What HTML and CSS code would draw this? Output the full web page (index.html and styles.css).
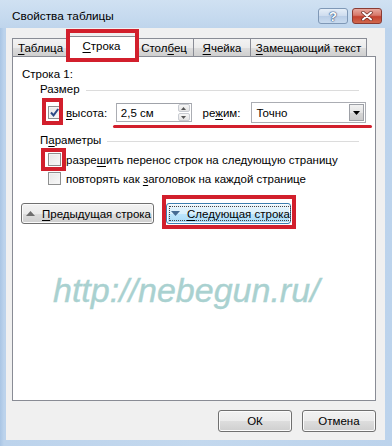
FILE: index.html
```html
<!doctype html>
<html lang="ru">
 <head>
  <meta charset="UTF-8">
  <meta name="viewport" content="width=device-width, initial-scale=1.0">
  <title>Свойства таблицы</title>
  <link rel="stylesheet" href="styles.css">
 </head>
 <body>
  <div class="window">
   <div class="titlebar">
    <span class="title">Свойства таблицы</span>
    <div class="caption-btns">
     <span class="cbtn help">?</span>
     <span class="cbtn close">
      <svg width="14" height="10" viewBox="0 0 14 10">
       <path d="M3 1.5 L11 8.5 M11 1.5 L3 8.5" stroke="#6b2a22" stroke-width="3.4" stroke-linecap="round"/>
       <path d="M3 1.5 L11 8.5 M11 1.5 L3 8.5" stroke="#fff" stroke-width="2" stroke-linecap="round"/>
      </svg>
     </span>
    </div>
   </div>

   <div class="client">
    <!-- вкладки -->
    <div class="tabs">
     <div class="tab tab-table"><span><u>Т</u>аблица</span></div>
     <div class="tab tab-row active"><span><u>С</u>трока</span><span class="mark mark-tab"></span></div>
     <div class="tab tab-col"><span>Стол<u>б</u>ец</span></div>
     <div class="tab tab-cell"><span><u>Я</u>чейка</span></div>
     <div class="tab tab-alt"><span><u>З</u>амещающий текст</span></div>
    </div>

    <div class="panel">
     <div class="row-title">Строка 1:</div>

     <div class="group-head"><span>Размер</span><i class="rule"></i></div>
     <div class="size-row">
      <span class="check">
       <svg width="11" height="11" viewBox="0 0 11 11"><path d="M2 5.5 L4.5 8.3 L9.2 2" fill="none" stroke="#2d4a86" stroke-width="2"/></svg>
       <span class="mark mark-check"></span>
      </span>
      <span class="lbl lbl-height"><u>в</u>ысота:</span>
      <div class="spin">
       <span class="spin-val">2,5 см</span>
       <span class="spin-btns">
        <span class="sbtn"><svg width="5" height="3" viewBox="0 0 5 3"><path d="M0 3 L2.5 0 L5 3Z" fill="#555"/></svg></span>
        <span class="sbtn"><svg width="5" height="3" viewBox="0 0 5 3"><path d="M0 0 L2.5 3 L5 0Z" fill="#555"/></svg></span>
       </span>
      </div>
      <span class="lbl lbl-mode">ре<u>ж</u>им:</span>
      <div class="select">
       <span class="select-val">Точно</span>
       <span class="drop"><svg width="7" height="4" viewBox="0 0 7 4"><path d="M0 0 L7 0 L3.5 4Z" fill="#000"/></svg></span>
      </div>
      <span class="mark mark-line"></span>
     </div>

     <div class="group-head group-params"><span>П<u>а</u>раметры</span><i class="rule"></i></div>
     <div class="check-row">
      <span class="check"><span class="mark mark-check2"></span></span>
      <span class="lbl">разре<u>ш</u>ить перенос строк на следующую страницу</span>
     </div>
     <div class="check-row">
      <span class="check"></span>
      <span class="lbl">повторять как <u>з</u>аголовок на каждой странице</span>
     </div>

     <div class="nav-row">
      <span class="btn btn-prev">
       <svg class="arr" width="9" height="5" viewBox="0 0 9 5"><path d="M0 5 L4.5 0 L9 5Z" fill="#6e6e6e"/></svg>
       <span class="btn-text"><u>П</u>редыдущая строка</span>
      </span>
      <span class="btn btn-next">
       <span class="focus">
        <svg class="arr" width="9" height="5" viewBox="0 0 9 5"><path d="M0 0 L9 0 L4.5 5Z" fill="#456b93"/></svg>
        <span class="btn-text"><u>С</u>ледующая строка</span>
       </span>
       <span class="mark mark-btn"></span>
      </span>
     </div>

     <div class="watermark">http://nebegun.ru/</div>
    </div>

    <div class="footer">
     <span class="btn btn-dlg">ОК</span>
     <span class="btn btn-dlg">Отмена</span>
    </div>
   </div>
  </div>
 </body>
</html>
```

FILE: styles.css
```css
body {
    margin: 0;
    font-family: "Liberation Sans", Arial, sans-serif;
    font-size: 11.5px;
    color: #000;
}
u {
    text-decoration: underline;
    text-underline-offset: 2px;
}
.window {
    width: 392px;
    height: 446px;
    box-sizing: border-box;
    padding: 0 7px 6px 6px;
    background: linear-gradient(90deg, #a9c5e4 0px, #bcd3ec 4px, #c3d8ee 50%, #bcd3ec 100%);
    display: flex;
    flex-direction: column;
}
.titlebar {
    height: 28px;
    display: flex;
    align-items: center;
    margin-left: -6px;
    margin-right: -7px;
    padding: 0 10px 0 12px;
    background: linear-gradient(180deg, #d0e1f2 0%, #c6daef 60%, #bfd5ec 100%);
}
.title {
    flex: 1;
    font-size: 11.8px;
    padding-top: 3px;
}
.caption-btns {
    display: flex;
    gap: 4px;
    align-self: flex-start;
    margin-top: 8px;
}
.cbtn {
    width: 30px;
    height: 16px;
    box-sizing: border-box;
    border-radius: 3px;
    display: flex;
    align-items: center;
    justify-content: center;
}
.help {
    border: 1px solid #7f98b6;
    background: linear-gradient(180deg, #e6eef8 0%, #cddcee 50%, #b9cde6 51%, #c9dbef 100%);
    color: #fff;
    font-weight: bold;
    font-size: 13px;
    text-shadow: 0 0 1px #2c4b79, 0 0 1px #2c4b79, 0 0 2px #4a6a98;
}
.close {
    border: 1px solid #8a3b33;
    background: linear-gradient(180deg, #e8a99f 0%, #d7786a 45%, #c4412f 55%, #d0684d 100%);
}
.client {
    flex: 1;
    background: #f0f0f0;
    padding: 10px 9px 0 6px;
}

/* вкладки */
.tabs {
    display: flex;
    align-items: flex-end;
    height: 19px;
    margin-bottom: -1px;
    position: relative;
    z-index: 1;
}
.tab {
    height: 18px;
    box-sizing: border-box;
    margin-bottom: 1px;
    margin-left: -1px;
    border: 1px solid #898c95;
    border-bottom: none;
    background: linear-gradient(180deg, #f3f3f3 0%, #ebebeb 50%, #dddddd 51%, #cfcfcf 100%);
    display: flex;
    align-items: center;
    justify-content: center;
    position: relative;
    white-space: nowrap;
}
.tab-table { margin-left: 0; width: 57px; }
.tab-row { width: 71px; margin-left: -3px; }
.tab-col { width: 60px; margin-left: -3px; }
.tab-cell { width: 58px; }
.tab-alt { width: 117px; }
.tab.active {
    height: 21px;
    margin-bottom: 0;
    background: #fff;
    z-index: 2;
    padding-bottom: 2px;
}
.panel {
    height: 345px;
    box-sizing: border-box;
    border: 1px solid #898c95;
    background: #fff;
    padding: 10px 9px 0 9px;
}
.row-title {
    line-height: 15px;
}
.group-head {
    display: flex;
    align-items: center;
    line-height: 15px;
    padding-left: 18px;
}
.group-head .rule {
    flex: 1;
    height: 1px;
    background: #dcdcdc;
    margin: 1px 7px 0 6px;
}
.group-params {
    margin-top: 10px;
}
.size-row {
    display: flex;
    align-items: center;
    height: 21px;
    margin-top: 5px;
    position: relative;
}
.check {
    width: 13px;
    height: 13px;
    box-sizing: border-box;
    border: 1px solid #8e8f8f;
    background: linear-gradient(135deg, #e6e6e6 0%, #f8f8f8 100%);
    box-shadow: inset 0 0 0 1px #f4f4f4;
    margin-left: 26px;
    margin-right: 5px;
    position: relative;
    display: flex;
    align-items: center;
    justify-content: center;
}
.lbl {
    white-space: nowrap;
}
.lbl-height {
    width: 50px;
}
.spin {
    width: 76px;
    height: 19px;
    box-sizing: border-box;
    border: 1px solid #abadb3;
    border-top-color: #a0a3aa;
    display: flex;
    align-items: center;
}
.spin-val {
    flex: 1;
    padding-left: 4px;
}
.spin-btns {
    display: flex;
    flex-direction: column;
    height: 17px;
    width: 12px;
    gap: 1px;
    margin-right: 1px;
}
.sbtn {
    flex: 1;
    border: 1px solid #c9ccd2;
    border-radius: 2px;
    background: linear-gradient(180deg, #f6f6f6, #e4e4e4);
    display: flex;
    align-items: center;
    justify-content: center;
}
.lbl-mode {
    margin-left: 11px;
    width: 49px;
}
.select {
    width: 115px;
    height: 21px;
    box-sizing: border-box;
    border: 1px solid #abadb3;
    display: flex;
    align-items: center;
}
.select-val {
    flex: 1;
    padding-left: 4px;
}
.drop {
    width: 15px;
    height: 17px;
    margin-right: 1px;
    box-sizing: border-box;
    border: 1px solid #9da0a6;
    background: linear-gradient(180deg, #f2f2f2 0%, #e4e4e4 50%, #d6d6d6 51%, #cbcbcb 100%);
    display: flex;
    align-items: center;
    justify-content: center;
}
.check-row {
    display: flex;
    align-items: center;
    height: 19px;
}
.group-params + .check-row {
    margin-top: 2px;
}
.nav-row {
    display: flex;
    gap: 12px;
    margin-top: 15px;
    margin-left: -1px;
}
.btn {
    height: 21px;
    box-sizing: border-box;
    border: 1px solid #707070;
    border-radius: 3px;
    background: linear-gradient(180deg, #f2f2f2 0%, #ebebeb 50%, #dddddd 51%, #cfcfcf 100%);
    box-shadow: inset 0 0 0 1px #fbfbfb;
    display: flex;
    align-items: center;
    position: relative;
    white-space: nowrap;
}
.btn-text {
    white-space: nowrap;
}
.arr {
    flex: none;
    margin: 0 7px 0 4px;
}
.btn-prev {
    width: 133px;
}
.btn-next {
    width: 125px;
    border-color: #3c7fb1;
    background: linear-gradient(180deg, #eaf6fd 0%, #d9f0fc 50%, #bee6fd 51%, #a7d9f5 100%);
}
.btn-next .arr {
    margin: 0 7px 0 1px;
}
.focus {
    display: flex;
    align-items: center;
    margin: 2px;
    flex: 1;
    align-self: stretch;
    border: 1px dotted #444;
}
.watermark {
    margin-top: 46px;
    padding-left: 31px;
    font-size: 34px;
    line-height: 40px;
    font-style: italic;
    color: #a9d1d0;
    -webkit-text-stroke: 0.4px #a9d1d0;
}
.footer {
    display: flex;
    justify-content: flex-end;
    gap: 10px;
    margin-top: 9px;
}
.btn-dlg {
    width: 74px;
    height: 22px;
    justify-content: center;
    border-color: #707070;
}

/* красные пометки */
.mark {
    position: absolute;
    border: 4px solid #d21f2c;
    pointer-events: none;
}
.mark-tab {
    left: -1px;
    right: -3px;
    top: -8px;
    bottom: -5px;
}
.mark-check {
    left: -7px;
    top: -9px;
    width: 21px;
    height: 27px;
    box-sizing: border-box;
}
.mark-check2 {
    left: -8px;
    top: -6px;
    width: 25px;
    height: 23px;
    box-sizing: border-box;
}
.mark-btn {
    left: -5px;
    right: -6px;
    top: -9px;
    bottom: -6px;
}
.mark-line {
    border: none;
    height: 3px;
    border-radius: 2px;
    background: #d21f2c;
    left: 91px;
    width: 259px;
    top: 23px;
}
```
